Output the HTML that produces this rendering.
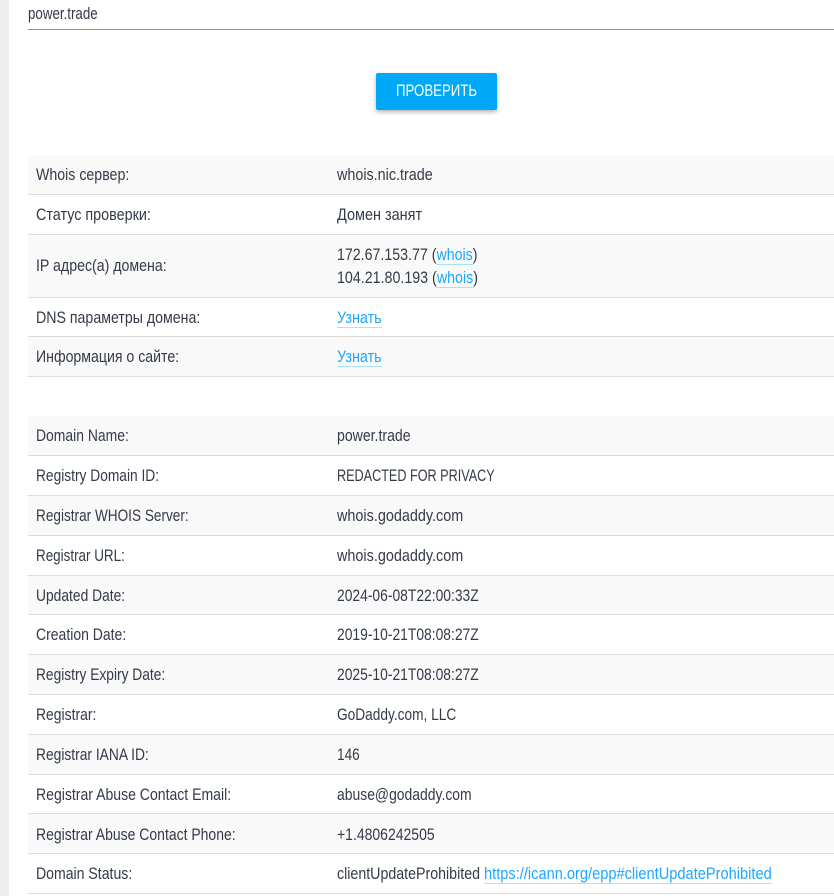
<!DOCTYPE html>
<html lang="ru"><head><meta charset="utf-8"><title>Whois</title>
<style>
html,body{margin:0;padding:0;background:#fff;}
body{position:relative;width:834px;height:896px;overflow:hidden;font-family:"Liberation Sans",sans-serif;font-size:17px;color:#343b48;line-height:20px;}
.side{position:absolute;left:0;top:0;width:9px;height:896px;background:#eee;}
.inp{position:absolute;left:28px;top:4px;transform-origin:0 50%;}
.il{position:absolute;left:28px;right:0;top:29px;height:1px;background:#868e96;}
.btn{position:absolute;left:376px;top:73px;width:121px;height:37px;background:#00a8f8;border-radius:2px;box-shadow:0 2px 4px rgba(0,0,0,.3);}
.btnt{position:absolute;left:396px;top:81px;color:#fff;white-space:nowrap;transform-origin:0 50%;}
.r{position:absolute;left:28px;right:0;border-bottom:1px solid #ddd;box-sizing:border-box;}
.g{background:#f9f9f9;}
.a,.b{position:absolute;white-space:nowrap;transform-origin:0 50%;}
.a{left:36px;}.b{left:336.5px;}
a{color:#1ea7fd;text-decoration:none;border-bottom:1px solid #a8e0ff;}
</style></head><body>
<div class="side"></div>
<div class="inp" style="transform:scaleX(.784)">power.trade</div><div class="il"></div>
<div class="btn"></div><div class="btnt" style="transform:scaleX(.778)">ПРОВЕРИТЬ</div>

<div class="r g" style="top:155px;height:40px"></div><div class="a" style="top:165px;transform:scaleX(.834)">Whois сервер:</div><div class="b" style="top:165px;transform:scaleX(.844)">whois.nic.trade</div>
<div class="r" style="top:195px;height:40px"></div><div class="a" style="top:205px;transform:scaleX(.845)">Статус проверки:</div><div class="b" style="top:205px;transform:scaleX(.851)">Домен занят</div>
<div class="r g" style="top:235px;height:63px"></div><div class="a" style="top:256px;transform:scaleX(.833)">IP адрес(а) домена:</div>
<div class="b" style="top:245px;transform:scaleX(.835)">172.67.153.77 (<a>whois</a>)</div><div class="b" style="top:268px;transform:scaleX(.838)">104.21.80.193 (<a>whois</a>)</div>
<div class="r" style="top:298px;height:39px"></div><div class="a" style="top:308px;transform:scaleX(.834)">DNS параметры домена:</div><div class="b" style="top:308px;transform:scaleX(.847)"><a>Узнать</a></div>
<div class="r g" style="top:337px;height:40px"></div><div class="a" style="top:347px;transform:scaleX(.831)">Информация о сайте:</div><div class="b" style="top:347px;transform:scaleX(.847)"><a>Узнать</a></div>

<div class="r g" style="top:416px;height:40px"></div><div class="a" style="top:426px;transform:scaleX(.819)">Domain Name:</div><div class="b" style="top:426px;transform:scaleX(.828)">power.trade</div>
<div class="r" style="top:456px;height:40px"></div><div class="a" style="top:466px;transform:scaleX(.809)">Registry Domain ID:</div><div class="b" style="top:466px;transform:scaleX(.743)">REDACTED FOR PRIVACY</div>
<div class="r g" style="top:496px;height:40px"></div><div class="a" style="top:506px;transform:scaleX(.8)">Registrar WHOIS Server:</div><div class="b" style="top:506px;transform:scaleX(.847)">whois.godaddy.com</div>
<div class="r" style="top:536px;height:40px"></div><div class="a" style="top:546px;transform:scaleX(.79)">Registrar URL:</div><div class="b" style="top:546px;transform:scaleX(.847)">whois.godaddy.com</div>
<div class="r g" style="top:576px;height:39px"></div><div class="a" style="top:586px;transform:scaleX(.813)">Updated Date:</div><div class="b" style="top:586px;transform:scaleX(.815)">2024-06-08T22:00:33Z</div>
<div class="r" style="top:615px;height:40px"></div><div class="a" style="top:625px;transform:scaleX(.823)">Creation Date:</div><div class="b" style="top:625px;transform:scaleX(.815)">2019-10-21T08:08:27Z</div>
<div class="r g" style="top:655px;height:40px"></div><div class="a" style="top:665px;transform:scaleX(.809)">Registry Expiry Date:</div><div class="b" style="top:665px;transform:scaleX(.815)">2025-10-21T08:08:27Z</div>
<div class="r" style="top:695px;height:40px"></div><div class="a" style="top:705px;transform:scaleX(.819)">Registrar:</div><div class="b" style="top:705px;transform:scaleX(.806)">GoDaddy.com, LLC</div>
<div class="r g" style="top:735px;height:40px"></div><div class="a" style="top:745px;transform:scaleX(.812)">Registrar IANA ID:</div><div class="b" style="top:745px;transform:scaleX(.8)">146</div>
<div class="r" style="top:775px;height:39px"></div><div class="a" style="top:785px;transform:scaleX(.826)">Registrar Abuse Contact Email:</div><div class="b" style="top:785px;transform:scaleX(.819)">abuse@godaddy.com</div>
<div class="r g" style="top:814px;height:40px"></div><div class="a" style="top:825px;transform:scaleX(.822)">Registrar Abuse Contact Phone:</div><div class="b" style="top:825px;transform:scaleX(.823)">+1.4806242505</div>
<div class="r" style="top:854px;height:40px"></div><div class="a" style="top:864px;transform:scaleX(.828)">Domain Status:</div><div class="b" style="top:864px;transform:scaleX(.836)">clientUpdateProhibited</div><div class="b" style="left:484px;top:864px;transform:scaleX(.86)"><a>https://icann.org/epp#clientUpdateProhibited</a></div>
</body></html>
